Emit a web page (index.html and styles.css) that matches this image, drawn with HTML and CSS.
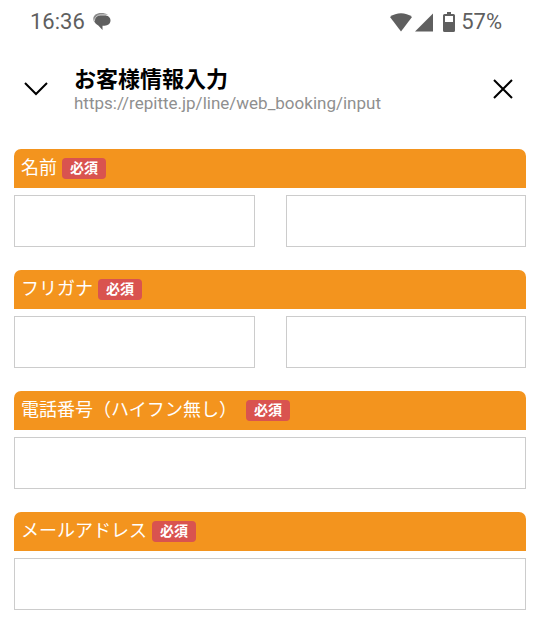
FILE: index.html
```html
<!DOCTYPE html>
<html lang="ja">
<head>
<meta charset="utf-8">
<meta name="viewport" content="width=device-width, initial-scale=1">
<title>お客様情報入力</title>
<link rel="stylesheet" href="styles.css">
</head>
<body>
<div class="status">
  <div class="status-group">
    <span>16:36</span>
    <svg class="chat" width="18" height="18" viewBox="0 0 18 18" aria-hidden="true">
      <path d="M8 0C3.500 0 .3 2.400.3 5.700c0 2 1 3.600 2.600 4.700V7.500C3 4.300 5.800 2 9.500 2h5.300C13.300.6 11 0 8 0Z" fill="#8a8a8a"/>
      <path d="M10 2.300h1.500c3.400 0 6 2.100 6 5.200s-2.400 5.200-6 5.200H9.500V17l-4.200-4.600C3.100 11.600 1.700 9.900 1.700 7.600c0-3.200 3.200-5.300 6.800-5.300Z" fill="#5f5f5f"/>
      <path d="M1.400 8.300C1.500 4.500 4.300 1.800 8.300 1.800h6" fill="none" stroke="#e8e8e8" stroke-width=".7"/>
    </svg>
  </div>
  <div class="status-group status-right">
    <svg width="44" height="19" viewBox="0 0 44 19" aria-hidden="true" fill="#5f5f5f">
      <path d="M0 4C6.500-1 15.500-1 22 4L11 18.500Z"/>
      <path d="M43 .5V18.500H25Z"/>
    </svg>
    <svg class="battery" width="12" height="20" viewBox="0 0 12 20" aria-hidden="true">
      <path fill="#5f5f5f" fill-rule="evenodd" d="M4 0h4v2h2.500Q12 2 12 3.500v15Q12 20 10.500 20h-9Q0 20 0 18.500v-15Q0 2 1.500 2H4ZM2 4v6h8V4Z"/>
    </svg>
    <span>57%</span>
  </div>
</div>
<header class="header">
  <button class="icon-button" type="button" aria-label="閉じる">
    <svg width="24" height="14" viewBox="0 0 24 14"><path d="m1 1 11 11L23 1" fill="none" stroke="#000" stroke-width="2"/></svg>
  </button>
  <div class="heading">
    <h1>お客様情報入力</h1>
    <p>https://repitte.jp/line/web_booking/input</p>
  </div>
  <button class="icon-button" type="button" aria-label="終了">
    <svg width="20" height="20" viewBox="0 0 20 20"><path d="m1 1 18 18M19 1 1 19" fill="none" stroke="#000" stroke-width="2"/></svg>
  </button>
</header>
<form class="form">
  <section class="field">
    <label class="label" for="last-name">名前<span class="badge">必須</span></label>
    <div class="inputs">
      <input id="last-name" type="text">
      <input type="text" aria-label="名前">
    </div>
  </section>
  <section class="field">
    <label class="label" for="last-kana">フリガナ<span class="badge">必須</span></label>
    <div class="inputs">
      <input id="last-kana" type="text">
      <input type="text" aria-label="フリガナ">
    </div>
  </section>
  <section class="field">
    <label class="label" for="phone">電話番号（ハイフン無し）&nbsp;<span class="badge">必須</span></label>
    <div class="inputs"><input id="phone" type="tel"></div>
  </section>
  <section class="field">
    <label class="label" for="email">メールアドレス<span class="badge">必須</span></label>
    <div class="inputs"><input id="email" type="email"></div>
  </section>
</form>
</body>
</html>
```
FILE: styles.css
```css
* {
  box-sizing: border-box;
}

body {
  margin: 0;
  background: #fff;
  font-family: Roboto, "Noto Sans CJK JP", sans-serif;
}

.status {
  display: flex;
  justify-content: space-between;
  padding: 9px 38px 0 30px;
  color: #5f5f5f;
  font-size: 22px;
  line-height: 26px;
}

.status-group {
  display: flex;
  align-items: center;
  gap: 8px;
}

.status-right {
  gap: 6px;
}

.battery {
  margin-left: 3px;
}

.header {
  display: flex;
  align-items: center;
  padding: 28px 24px 0;
}

.icon-button {
  display: flex;
  padding: 0;
  border: 0;
  background: none;
}

.icon-button:last-child {
  margin-right: 3px;
}

.heading {
  flex: 1;
  padding-left: 26px;
}

h1,
p {
  margin: 0;
}

h1 {
  font-family: "Noto Sans CJK JP", sans-serif;
  font-size: 22px;
  font-weight: 700;
  line-height: 28px;
}

p {
  color: #8f8f8f;
  font-size: 17px;
  line-height: 24px;
}

.form {
  display: grid;
  gap: 23px;
  padding: 34px 14px 14px;
}

.field {
  display: grid;
  gap: 7px;
}

.label {
  display: flex;
  align-items: flex-start;
  gap: 5px;
  height: 39px;
  padding: 9px 7px 0;
  border-radius: 7px 7px 0 0;
  background: #f3941e;
  color: #fff;
  font-family: "Noto Sans CJK JP", sans-serif;
  font-size: 18px;
  line-height: 17px;
  white-space: pre;
}

.badge {
  padding: 0 8px 2px;
  border-radius: 4px;
  background: #d9534f;
  font-size: 14px;
  font-weight: 700;
  line-height: 19px;
}

.inputs {
  display: flex;
  gap: 31px;
}

input {
  flex: 1;
  min-width: 0;
  height: 52px;
  padding: 0 12px;
  border: 1px solid #ccc;
  border-radius: 0;
  background: #fff;
  font: inherit;
}
```
